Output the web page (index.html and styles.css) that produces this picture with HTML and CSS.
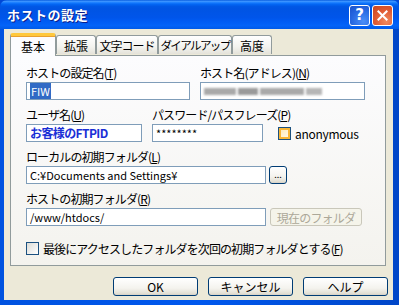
FILE: index.html
```html
<!DOCTYPE html>
<html lang="ja">
<head>
  <meta charset="UTF-8" />
  <title>ホストの設定</title>
  <link rel="stylesheet" href="styles.css">
</head>
<body>
  <div class="window">
    <div class="titlebar">
      <span class="title">ホストの設定</span>
      <div class="caption-buttons">
        <span class="cap-btn help">?</span>
        <span class="cap-btn close">
          <svg viewBox="0 0 21 21" width="21" height="21"><path d="M6 6 L15 15 M15 6 L6 15" stroke="#fff" stroke-width="2.2" stroke-linecap="square"/></svg>
        </span>
      </div>
    </div>
    <div class="frame">
      <div class="client">
        <div class="tabs">
          <span class="tab active w46">基本</span>
          <span class="tab w40">拡張</span>
          <span class="tab w62">文字コード</span>
          <span class="tab w74">ダイアルアップ</span>
          <span class="tab w40">高度</span>
        </div>
        <div class="panel">
          <div class="row">
            <div class="field w164">
              <div class="label">ホストの設定名(<u>T</u>)</div>
              <div class="input"><span class="selected">FIW</span></div>
            </div>
            <div class="field w165">
              <div class="label">ホスト名(アドレス)(<u>N</u>)</div>
              <div class="input">
                <div class="blurred">
                  <span class="blot b1"></span><span class="blot b2"></span><span class="blot b3"></span><span class="blot b4"></span>
                </div>
              </div>
            </div>
          </div>
          <div class="row">
            <div class="field w116">
              <div class="label">ユーザ名(<u>U</u>)</div>
              <div class="input user">お客様のFTPID</div>
            </div>
            <div class="field w111">
              <div class="label">パスワード/パスフレーズ(<u>P</u>)</div>
              <div class="input">********</div>
            </div>
            <div class="check-inline">
              <span class="checkbox hot"></span>
              <span class="check-text">anonymous</span>
            </div>
          </div>
          <div class="field">
            <div class="label">ローカルの初期フォルダ(<u>L</u>)</div>
            <div class="input-row">
              <div class="input w240">C:¥Documents and Settings¥</div>
              <span class="btn small">...</span>
            </div>
          </div>
          <div class="field">
            <div class="label">ホストの初期フォルダ(<u>R</u>)</div>
            <div class="input-row">
              <div class="input w240">/www/htdocs/</div>
              <span class="btn disabled">現在のフォルダ</span>
            </div>
          </div>
          <div class="check-row">
            <span class="checkbox"></span>
            <span class="check-text">最後にアクセスしたフォルダを次回の初期フォルダとする(<u>F</u>)</span>
          </div>
        </div>
        <div class="buttons">
          <span class="btn dlg">OK</span>
          <span class="btn dlg">キャンセル</span>
          <span class="btn dlg">ヘルプ</span>
        </div>
      </div>
    </div>
  </div>
</body>
</html>
```

FILE: styles.css
```css
body {
  margin: 0;
  width: 399px;
  height: 305px;
  overflow: hidden;
  font-family: "Noto Sans CJK JP", "DejaVu Sans", sans-serif;
  font-size: 11px;
  color: #000;
  background: #0047d6;
}
.window {
  display: flex;
  flex-direction: column;
  width: 399px;
  height: 305px;
}
.titlebar {
  height: 29px;
  display: flex;
  align-items: center;
  justify-content: space-between;
  padding: 0 6px 0 7px;
  box-sizing: border-box;
  border-radius: 7px 7px 0 0;
  background: linear-gradient(to bottom, #0a5fe0 0%, #3a93ff 5%, #1c80ff 9%, #0368f5 14%, #0058e6 22%, #0054e3 30%, #0055ea 60%, #005cf4 75%, #0363f8 88%, #005ae8 100%);
}
.title {
  color: #fff;
  font-weight: bold;
  font-size: 13px;
  text-shadow: 1px 1px 0 #0a1e8c;
  letter-spacing: 0.5px;
}
.caption-buttons {
  display: flex;
  gap: 2px;
  margin-top: 1px;
}
.cap-btn {
  width: 21px;
  height: 21px;
  box-sizing: border-box;
  border: 1px solid #fff;
  border-radius: 3px;
  display: flex;
  align-items: center;
  justify-content: center;
  color: #fff;
  font-family: "DejaVu Sans", sans-serif;
  font-weight: bold;
  font-size: 15px;
}
.help {
  background: radial-gradient(circle at 70% 80%, #4a8ef8 0%, #2466e0 60%, #1a50c8 100%);
}
.close {
  background: radial-gradient(circle at 70% 80%, #f08a5e 0%, #e05a32 55%, #c7461f 100%);
}
.close svg {
  display: block;
}
.frame {
  flex: 1;
  padding: 0 6px 5px 4px;
  background: linear-gradient(to right, #0052e0, #0058ee 50%, #0046c8);
  display: flex;
}
.client {
  flex: 1;
  background: #ece9d8;
  padding-top: 4px;
  display: flex;
  flex-direction: column;
}
.tabs {
  display: flex;
  align-items: flex-end;
  height: 22px;
  margin-left: 6px;
  position: relative;
  z-index: 1;
}
.tab {
  height: 19px;
  box-sizing: border-box;
  border: 1px solid #919b9c;
  border-bottom: none;
  border-radius: 3px 3px 0 0;
  background: linear-gradient(#ffffff, #f3f3ef 60%, #e4e2d9);
  display: flex;
  align-items: center;
  justify-content: center;
  margin-bottom: 1px;
  white-space: nowrap;
  font-size: 12px;
}
.tab.active {
  height: 23px;
  margin-bottom: -1px;
  border-top: 3px solid #ffc83c;
  background: #fcfcfe;
  box-shadow: inset 0 1px 0 #e8a030;
}
.w46 { width: 46px; }
.w40 { width: 40px; }
.w62 { width: 62px; letter-spacing: -1px; }
.w74 { width: 74px; font-size: 11.5px; letter-spacing: -1.6px; }
.panel {
  margin: 0 7px 0 6px;
  height: 211px;
  box-sizing: border-box;
  border: 1px solid #919b9c;
  background: linear-gradient(#fcfcfe, #f4f3ee);
  padding: 9px 0 0 15px;
  display: flex;
  flex-direction: column;
  gap: 7px;
}
.row {
  display: flex;
  align-items: flex-end;
  gap: 10px;
}
.field {
  display: flex;
  flex-direction: column;
}
.w164 { width: 164px; }
.w165 { width: 165px; }
.w116 { width: 116px; }
.w111 { width: 111px; }
.w240 { width: 240px; }
.label {
  height: 15px;
  line-height: 15px;
  margin-bottom: 2px;
  white-space: nowrap;
  font-size: 12px;
  letter-spacing: -0.9px;
}
.input {
  height: 18px;
  box-sizing: border-box;
  border: 1px solid #7f9db9;
  background: #fff;
  padding: 0 3px;
  line-height: 16px;
  white-space: nowrap;
  overflow: hidden;
}
.selected {
  background: #316ac5;
  color: #fff;
  padding: 0 1px;
}
.user {
  color: #1a2fd6;
  font-weight: bold;
  font-size: 12px;
  letter-spacing: -0.6px;
}
.blurred {
  display: flex;
  align-items: center;
  height: 16px;
  gap: 2px;
}
.blot {
  height: 7px;
  background: #a9a9a9;
  filter: blur(1.2px);
}
.b1 { width: 32px; }
.b2 { width: 20px; background: #9a9a9a; }
.b3 { width: 44px; }
.b4 { width: 16px; background: #b6b6b6; }
.check-inline {
  display: flex;
  align-items: center;
  gap: 4px;
  margin-left: 5px;
  height: 18px;
}
.checkbox {
  width: 13px;
  height: 13px;
  box-sizing: border-box;
  border: 1px solid #1c5180;
  background: linear-gradient(135deg, #dcdcd7, #ffffff);
  flex: none;
}
.checkbox.hot {
  box-shadow: inset 0 0 0 2px #f8b636;
  background: linear-gradient(135deg, #fde8b0, #fffaf0);
}
.check-text {
  white-space: nowrap;
  font-size: 12px;
  letter-spacing: -0.9px;
}
.check-inline .check-text {
  letter-spacing: -0.3px;
}
.input-row {
  display: flex;
  align-items: center;
  gap: 3px;
}
.btn {
  box-sizing: border-box;
  border: 1px solid #003c74;
  border-radius: 3px;
  background: linear-gradient(#ffffff, #f4f3ee 60%, #e3e0d5 90%, #d6d0c5);
  display: flex;
  align-items: center;
  justify-content: center;
  white-space: nowrap;
  font-size: 12px;
}
.btn.small {
  width: 18px;
  height: 18px;
  font-size: 9px;
  line-height: 10px;
}
.btn.disabled {
  width: 92px;
  height: 18px;
  margin-left: 1px;
  border-color: #c9c7ba;
  background: #f5f4ea;
  color: #aca899;
  letter-spacing: -0.8px;
}
.check-row {
  display: flex;
  align-items: center;
  gap: 4px;
  margin-top: 7px;
  height: 17px;
}
.buttons {
  display: flex;
  justify-content: flex-end;
  gap: 10px;
  padding-right: 5px;
  margin-top: 11px;
}
.btn.dlg {
  width: 85px;
  height: 19px;
}
```
